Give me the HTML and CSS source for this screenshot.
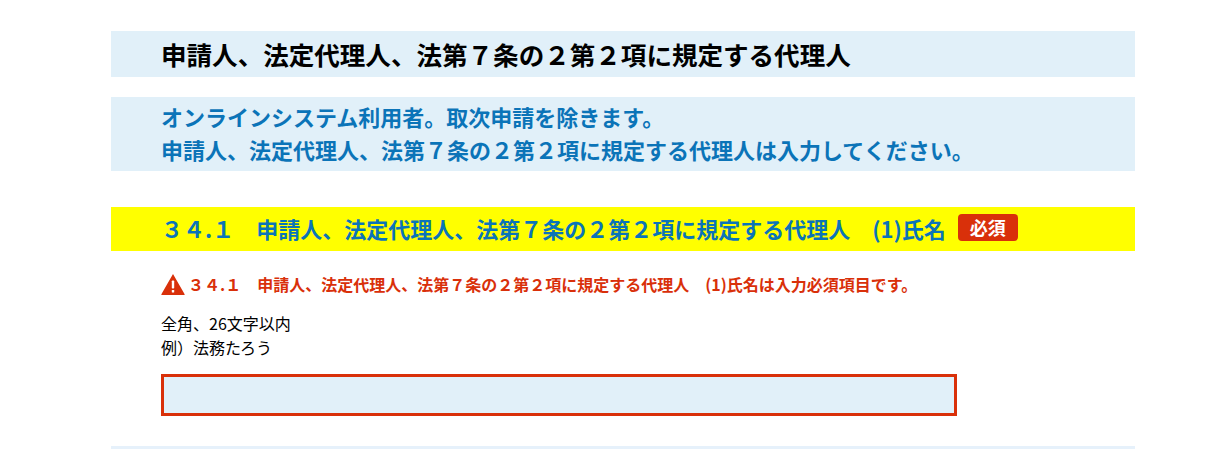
FILE: index.html
```html
<!DOCTYPE html>
<html lang="ja">
<head>
  <meta charset="UTF-8">
  <meta name="viewport" content="width=device-width, initial-scale=1">
  <title>申請人、法定代理人、法第７条の２第２項に規定する代理人</title>
  <link rel="stylesheet" href="styles.css">
</head>
<body>

<div class="container">

  <h2 class="section-title">申請人、法定代理人、法第７条の２第２項に規定する代理人</h2>

  <div class="section-note">
    オンラインシステム利用者。取次申請を除きます。<br>
    申請人、法定代理人、法第７条の２第２項に規定する代理人は入力してください。
  </div>

  <div class="field-title">
    <label for="applicantName">３４.１　申請人、法定代理人、法第７条の２第２項に規定する代理人　(1)氏名</label>
    <span class="required">必須</span>
  </div>

  <div class="field-body">
    <div class="error-row">
      <svg class="error-icon" viewBox="0 0 24 22" width="24" height="22" aria-hidden="true">
        <path d="M12 1 L23.5 21 a0.6 0.6 0 0 1 -0.5 1 H1 a0.6 0.6 0 0 1 -0.5 -1 Z" fill="#d9300a"/>
        <rect x="10.8" y="7.5" width="2.4" height="8" rx="0.8" fill="#fff"/>
        <rect x="10.8" y="17" width="2.4" height="2.5" rx="0.6" fill="#fff"/>
      </svg>
      <span>３４.１　申請人、法定代理人、法第７条の２第２項に規定する代理人　(1)氏名は入力必須項目です。</span>
    </div>

    <div class="hint">
      全角、26文字以内<br>
      例）法務たろう
    </div>

    <input id="applicantName" class="text-input" type="text">
  </div>

  <div class="next-section"></div>

</div>

</body>
</html>
```

FILE: styles.css
```css
:root {
  --band: #e1f0f9;
  --blue: #0b74b8;
  --red: #d9300a;
}

html, body {
  height: 449px;
  overflow: hidden;
}

body {
  margin: 0;
  background-color: #ffffff;
  color: #000000;
  font-family: "Noto Sans CJK JP", "Noto Sans", sans-serif;
}

.container {
  width: 1024px;
  margin-left: 111px;
  padding-top: 31px;
}

.section-title {
  margin: 0;
  height: 46px;
  padding-left: 50px;
  background-color: var(--band);
  font-size: 25.55px;
  line-height: 46px;
  font-weight: 700;
}

.section-note {
  margin-top: 20px;
  height: 74px;
  padding-left: 50px;
  background-color: var(--band);
  color: var(--blue);
  font-size: 22px;
  line-height: 33px;
  font-weight: 700;
  box-sizing: border-box;
  padding-top: 3px;
}

.field-title {
  display: flex;
  align-items: center;
  box-sizing: border-box;
  margin-top: 36px;
  height: 44px;
  padding: 0 0 3px 50px;
  background-color: #ffff00;
  color: var(--blue);
  font-size: 22px;
  font-weight: 700;
}

.required {
  margin-left: 12px;
  padding: 0 12px;
  height: 27px;
  line-height: 27px;
  border-radius: 4px;
  background-color: var(--red);
  color: #ffffff;
  font-size: 18px;
}

.field-body {
  padding: 21px 0 0 50px;
}

.error-row {
  display: flex;
  align-items: center;
  gap: 3px;
  height: 24px;
  color: var(--red);
  font-size: 16px;
  font-weight: 700;
}

.hint {
  margin-top: 15px;
  font-size: 16px;
  line-height: 24px;
}

.text-input {
  display: block;
  box-sizing: border-box;
  width: 796px;
  height: 42px;
  margin-top: 15px;
  border: 3px solid var(--red);
  background-color: var(--band);
}

.next-section {
  height: 3px;
  margin-top: 30px;
  background-color: #e6f1fb;
}
```
